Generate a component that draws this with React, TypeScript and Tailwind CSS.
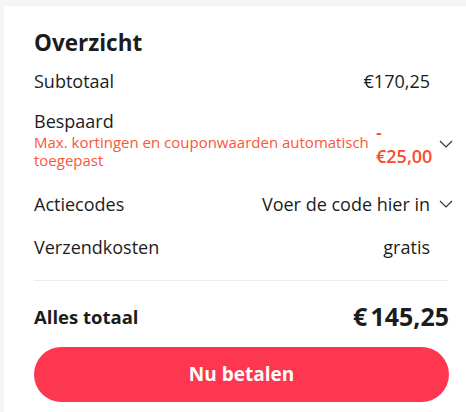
import React from "react";

function Chevron() {
  return (
    <svg width="14" height="8" viewBox="0 0 14 8" fill="none" className="ml-[9px] shrink-0">
      <path d="M1 1l6 6 6-6" stroke="#333" strokeWidth="1.2" />
    </svg>
  );
}

function Row({
  label,
  value,
  chevron,
  className = "",
}: {
  label: string;
  value: string;
  chevron?: boolean;
  className?: string;
}) {
  return (
    <div className={`flex items-center justify-between text-[18px] font-medium leading-6 text-[#1c1c1c] ${className}`}>
      <span>{label}</span>
      <div className="flex items-center">
        <span>{value}</span>
        <div className="flex w-[19px] shrink-0 items-center">{chevron && <Chevron />}</div>
      </div>
    </div>
  );
}

export default function App() {
  return (
    <div
      className="min-h-screen bg-[#f5f5f5] pl-1 pt-1.5"
      style={{ fontFamily: '"Open Sans", "Liberation Sans", sans-serif' }}
    >
      <div className="min-h-[406px] bg-white pl-[30px] pr-[17px] pt-[22px] pb-2">
        <h2 className="text-[22.5px] font-bold leading-[30px] text-[#1c1c1c]">Overzicht</h2>

        <Row label="Subtotaal" value="€170,25" className="mt-[11px]" />

        <div className="mt-4 flex items-center justify-between font-medium text-[#1c1c1c]">
          <div className="w-[340px] pb-[9px]">
            <p className="text-[18px] leading-6">Bespaard</p>
            <p className="text-[15px] font-normal leading-[18px] text-[#fb5638]">
              Max. kortingen en couponwaarden automatisch toegepast
            </p>
          </div>
          <div className="flex items-center">
            <span className="w-[54px] text-[18px] font-semibold leading-6 text-[#fa4b2e]">- €25,00</span>
            <div className="flex w-[19px] shrink-0 items-center">
              <Chevron />
            </div>
          </div>
        </div>

        <Row label="Actiecodes" value="Voer de code hier in" chevron className="mt-[14px]" />
        <Row label="Verzendkosten" value="gratis" className="mt-[19px]" />

        <div className="mt-[21px] h-px bg-[#ececec]" />

        <div className="mt-[19px] flex items-end justify-between text-[#1c1c1c]">
          <span className="pb-[3px] text-[18.5px] font-bold leading-6">Alles totaal</span>
          <span className="text-[25px] font-bold leading-8">
            €<span className="ml-[3px]">145,25</span>
          </span>
        </div>

        <button
          type="button"
          className="mt-[15px] flex h-[55px] w-full items-center justify-center rounded-full bg-[#fe3750] text-[19px] font-bold text-white"
        >
          Nu betalen
        </button>
      </div>
    </div>
  );
}
